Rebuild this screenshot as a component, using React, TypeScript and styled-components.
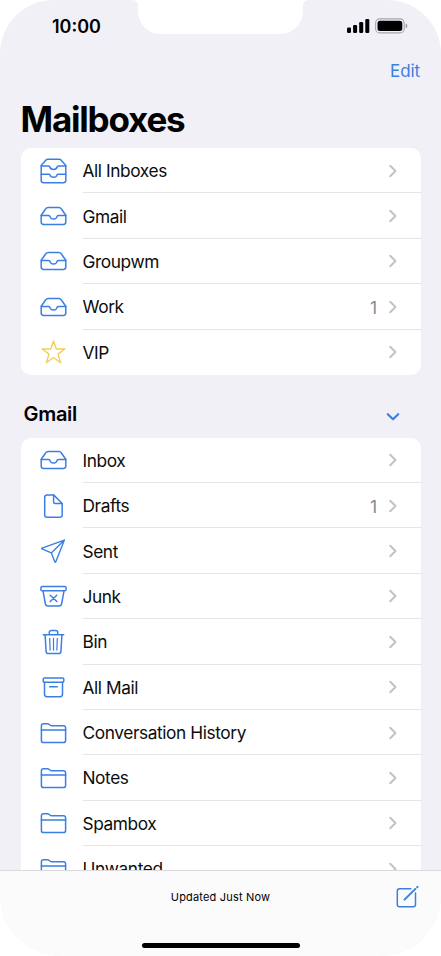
import React from "react";
import styled, { createGlobalStyle, css } from "styled-components";

const blue = "#3b7fe4";

const GlobalStyle = createGlobalStyle`
  *, *::before, *::after { box-sizing: border-box; }
  body { margin: 0; background: #fff; overflow: hidden; }
  h1, h2, p { margin: 0; }
  button { border: 0; padding: 0; background: none; font: inherit; color: inherit; }
`;

const Screen = styled.main`
  position: relative;
  display: flex;
  flex-direction: column;
  width: 441px;
  height: 956px;
  overflow: hidden;
  border-radius: 54px 54px 61px 61px;
  background: #f1f0f6;
  color: #0c0c0d;
  font-family: Inter, "Liberation Sans", sans-serif;
`;

const Notch = styled.svg`
  position: absolute;
  top: 0;
  left: 132px;
`;

const StatusBar = styled.header`
  display: flex;
  flex: none;
  align-items: center;
  justify-content: space-between;
  height: 52px;
  padding: 0 33px 0 52px;
`;

const Clock = styled.time`
  color: #000;
  font-size: 18px;
  font-weight: 600;
  letter-spacing: 0;
`;

const NavBar = styled.nav`
  display: flex;
  flex: none;
  align-items: center;
  justify-content: flex-end;
  height: 38px;
  padding-right: 21px;
`;

const EditButton = styled.button`
  color: ${blue};
  font-size: 17px;
  letter-spacing: -0.1px;
`;

const Title = styled.h1`
  flex: none;
  height: 58px;
  padding-left: 20.5px;
  color: #000;
  font-size: 35px;
  font-weight: 700;
  line-height: 59px;
  letter-spacing: -1.2px;
`;

const MailboxArea = styled.div`
  flex: 1;
  min-height: 0;
  overflow: hidden;
  padding: 0 20.5px;
`;

const Card = styled.section`
  overflow: hidden;
  border-radius: 10px;
  background: #fff;
`;

const SectionHeader = styled.div`
  display: flex;
  align-items: center;
  justify-content: space-between;
  height: 62.6px;
  padding: 15px 21px 0 3px;
`;

const SectionTitle = styled.h2`
  color: #000;
  font-size: 20px;
  font-weight: 600;
  letter-spacing: -0.3px;
`;

const Row = styled.div`
  display: flex;
  align-items: stretch;
  height: 45.4px;
  padding-left: 18.5px;
`;

const IconSlot = styled.div<{ $gold?: boolean }>`
  display: flex;
  align-items: center;
  width: 43.5px;
  color: ${(p) => (p.$gold ? "#f3cf55" : blue)};
`;

const RowBody = styled.div<{ $last?: boolean }>`
  display: flex;
  flex: 1;
  align-items: center;
  padding-right: 22.5px;
  ${(p) =>
    !p.$last &&
    css`
      box-shadow: inset 0 -1px #e6e6e8;
    `}
`;

const Label = styled.span`
  flex: 1;
  font-size: 17.3px;
  letter-spacing: -0.4px;
  white-space: nowrap;
`;

const Count = styled.span`
  margin-right: 11px;
  padding-top: 1px;
  color: #8b8b8f;
  font-size: 17.5px;
`;

const Toolbar = styled.footer`
  display: flex;
  flex: none;
  flex-direction: column;
  align-items: center;
  height: 86px;
  border-top: 1px solid #dbdbde;
  background: #fbfbfb;
`;

const ToolbarRow = styled.div`
  display: grid;
  grid-template-columns: 1fr auto 1fr;
  align-items: center;
  width: 100%;
  height: 52px;
  padding: 0 22px;
`;

const SyncStatus = styled.p`
  grid-column: 2;
  color: #000;
  font-size: 11px;
  letter-spacing: 0.18px;
`;

const ComposeButton = styled.button`
  display: flex;
  justify-self: end;
  color: ${blue};
`;

const HomeIndicator = styled.div`
  width: 158px;
  height: 5px;
  margin-top: 19.5px;
  border-radius: 3px;
  background: #000;
`;

const Line = styled.svg`
  display: block;
  flex: none;
  overflow: visible;
  fill: none;
  stroke: currentColor;
  stroke-width: 1.5;
  stroke-linecap: round;
  stroke-linejoin: round;
`;

const Chevron = styled(Line)`
  color: #c2c2c5;
  stroke-width: 2;
`;

const ExpandChevron = styled(Line)`
  margin-top: 4px;
  color: ${blue};
  stroke-width: 2.2;
`;

type IconName = "trays" | "tray" | "star" | "doc" | "sent" | "junk" | "bin" | "archive" | "folder";

const icons: Record<IconName, React.ReactNode> = {
  trays: (
    <>
      <path d="M1.7 8.4 6.5 3Q7.2 2.2 8.4 2.2H19.6Q20.8 2.2 21.5 3L26.3 8.4V23.5Q26.3 25.7 23.9 25.7H4.1Q1.7 25.7 1.7 23.5Z" />
      <path d="M1.7 8.9H9Q10.2 8.9 10.4 10C11 13.2 17 13.2 17.6 10Q17.8 8.9 19 8.9H26.3" />
      <path d="M1.7 17.2H9.3Q10.4 17.2 10.6 18.1C11.2 20.9 16.8 20.9 17.4 18.1Q17.6 17.2 18.7 17.2H26.3" />
    </>
  ),
  tray: (
    <>
      <path d="M6.3 6.7Q7.1 5.4 8.6 5.4H19.4Q20.9 5.4 21.7 6.7L26.3 13.2V20.1Q26.3 22.5 23.9 22.5H4.1Q1.7 22.5 1.7 20.1V13.2Z" />
      <path d="M1.7 13.5H9.1Q10.3 13.5 10.5 14.5C11 17.8 17 17.8 17.5 14.5Q17.7 13.5 18.9 13.5H26.3" />
    </>
  ),
  star: (
    <path d="M14 2.9 16.8 11H25.4L18.5 16.1 21.1 24.7 14 19.5 6.9 24.7 9.5 16.1 2.6 11H11.2Z" strokeWidth="1.4" />
  ),
  doc: (
    <>
      <path d="M7.5 2.9H14.1L22.7 11.5V23Q22.7 25.3 20.4 25.3H7.5Q5.2 25.3 5.2 23V5.2Q5.2 2.9 7.5 2.9Z" />
      <path d="M14.1 3V10Q14.1 11.5 15.6 11.5H22.5" />
    </>
  ),
  sent: (
    <path
      d="M24.9 3.1 2.4 11.1Q1.8 11.5 2.5 11.9L11.8 15.9 15.4 25Q15.8 25.7 16.2 25ZL11.8 15.9"
      strokeWidth="1.4"
    />
  ),
  junk: (
    <>
      <rect x="1.4" y="4.5" width="25.2" height="4.3" rx="1.4" />
      <path d="M3.5 8.8 5.9 22Q6.3 24 8.4 24H19.6Q21.7 24 22.1 22L24.5 8.8M10.7 13.2l6.6 6.3M17.3 13.2l-6.6 6.3" />
    </>
  ),
  bin: (
    <>
      <path d="M3.8 6.8H24.2M9.8 6.5V4.6Q9.8 2.6 11.8 2.6H16.2Q18.2 2.6 18.2 4.6V6.5" />
      <path d="M5.6 6.8 6.6 23.5Q6.7 25.6 8.8 25.6H19.2Q21.3 25.6 21.4 23.5L22.4 6.8" />
      <path d="M10.2 10.4 10.6 22.1M14 10.4V22.1M17.8 10.4 17.4 22.1" strokeWidth="1.25" />
    </>
  ),
  archive: (
    <>
      <rect x="3.7" y="4.9" width="20.6" height="4.4" rx="1.2" />
      <path d="M5 9.3V21.3Q5 23.7 7.4 23.7H20.6Q23 23.7 23 21.3V9.3M10.2 13.7H17.8" />
    </>
  ),
  folder: (
    <>
      <path d="M4.1 23.6Q1.9 23.6 1.9 21.4V7Q1.9 4.8 4.1 4.8H7.9Q8.9 4.8 9.8 5.5L10.6 6.2Q11.3 6.8 12.4 6.8H23.9Q26.1 6.8 26.1 9V21.4Q26.1 23.6 23.9 23.6Z" />
      <path d="M1.9 11H26.1" />
    </>
  ),
};

interface Mailbox {
  name: string;
  icon: IconName;
  count?: number;
}

const accounts: Mailbox[] = [
  { name: "All Inboxes", icon: "trays" },
  { name: "Gmail", icon: "tray" },
  { name: "Groupwm", icon: "tray" },
  { name: "Work", icon: "tray", count: 1 },
  { name: "VIP", icon: "star" },
];

const folders: Mailbox[] = [
  { name: "Inbox", icon: "tray" },
  { name: "Drafts", icon: "doc", count: 1 },
  { name: "Sent", icon: "sent" },
  { name: "Junk", icon: "junk" },
  { name: "Bin", icon: "bin" },
  { name: "All Mail", icon: "archive" },
  { name: "Conversation History", icon: "folder" },
  { name: "Notes", icon: "folder" },
  { name: "Spambox", icon: "folder" },
  { name: "Unwanted", icon: "folder" },
];

function MailboxList({ items }: { items: Mailbox[] }) {
  return (
    <Card>
      {items.map((item, i) => (
        <Row key={item.name}>
          <IconSlot $gold={item.icon === "star"}>
            <Line width="28" height="28" viewBox="-0.5 0 28 28">
              {icons[item.icon]}
            </Line>
          </IconSlot>
          <RowBody $last={i === items.length - 1}>
            <Label>{item.name}</Label>
            {item.count !== undefined && <Count>{item.count}</Count>}
            <Chevron width="10" height="14" viewBox="0 0 10 14">
              <path d="M2.2 1.7 7.5 7 2.2 12.3" />
            </Chevron>
          </RowBody>
        </Row>
      ))}
    </Card>
  );
}

export default function App() {
  return (
    <>
      <GlobalStyle />
      <Screen>
        <Notch width="177" height="34" viewBox="0 0 177 34">
          <path
            d="M0 0H177Q171 .3 171 5V10.5C171 24 161 34 148 34H29C16 34 6 24 6 10.5V5Q6 .3 0 0Z"
            fill="#fff"
          />
        </Notch>
        <StatusBar>
          <Clock>10:00</Clock>
          <svg width="61" height="16" viewBox="0 0 61 16">
            <rect x="0" y="9.5" width="4" height="5.5" rx="1.2" />
            <rect x="6.1" y="7" width="4" height="8" rx="1.2" />
            <rect x="12.2" y="4" width="4" height="11" rx="1.2" />
            <rect x="18.3" y="1" width="4" height="14" rx="1.2" />
            <rect x="28.6" y="0.9" width="28.6" height="14" rx="4.2" fill="none" stroke="#a7a6aa" strokeWidth="1.1" />
            <rect x="30.5" y="2.8" width="24.8" height="10.2" rx="2.5" />
            <path d="M58.7 5.6Q60.4 6.3 60.4 7.9T58.7 10.2Z" fill="#99989c" />
          </svg>
        </StatusBar>
        <NavBar>
          <EditButton>Edit</EditButton>
        </NavBar>
        <Title>Mailboxes</Title>
        <MailboxArea>
          <MailboxList items={accounts} />
          <SectionHeader>
            <SectionTitle>Gmail</SectionTitle>
            <ExpandChevron width="14" height="10" viewBox="0 0 14 10">
              <path d="M1.8 3.2 7 8.2 12.2 3.2" />
            </ExpandChevron>
          </SectionHeader>
          <MailboxList items={folders} />
        </MailboxArea>
        <Toolbar>
          <ToolbarRow>
            <SyncStatus>Updated Just Now</SyncStatus>
            <ComposeButton aria-label="Compose">
              <Line width="24" height="24" viewBox="-0.3 0 24 24">
                <path d="M15.5 3.8H4.3Q2 3.8 2 6.1V19.4Q2 21.7 4.3 21.7H17.9Q20.2 21.7 20.2 19.4V7.9" />
                <path d="M9.2 14.6 20.1 3.9" strokeWidth="2" />
                <path d="M21.9 2.2 22.3 1.8" strokeWidth="2" />
              </Line>
            </ComposeButton>
          </ToolbarRow>
          <HomeIndicator />
        </Toolbar>
      </Screen>
    </>
  );
}
